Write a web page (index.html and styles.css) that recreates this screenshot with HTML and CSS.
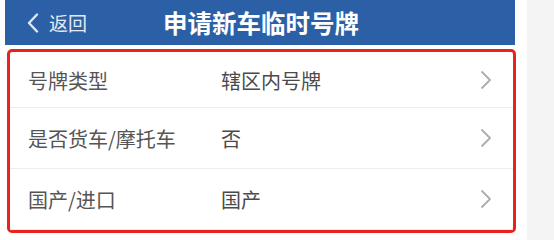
FILE: index.html
```html
<!DOCTYPE html>
<html lang="zh-CN">
<head>
<meta charset="utf-8">
<title>申请新车临时号牌</title>
<link rel="stylesheet" href="styles.css">
</head>
<body>
<div class="page">
  <header class="topbar">
    <div class="back">
      <svg class="back-icon" width="14" height="20" viewBox="0 0 14 20"><polyline points="11,1.5 3,10 11,18.5" fill="none" stroke="#dfe7f3" stroke-width="2.4" stroke-linecap="round" stroke-linejoin="round"/></svg>
      <span class="back-text">返回</span>
    </div>
    <h1 class="title">申请新车临时号牌</h1>
  </header>
  <div class="list">
    <div class="row first">
      <span class="label">号牌类型</span>
      <span class="value">辖区内号牌</span>
      <svg class="arrow" width="12" height="20" viewBox="0 0 12 20"><polyline points="1.5,1.5 10,10 1.5,18.5" fill="none" stroke="#adadad" stroke-width="1.8" stroke-linejoin="round"/></svg>
    </div>
    <div class="row">
      <span class="label">是否货车/摩托车</span>
      <span class="value">否</span>
      <svg class="arrow" width="12" height="20" viewBox="0 0 12 20"><polyline points="1.5,1.5 10,10 1.5,18.5" fill="none" stroke="#adadad" stroke-width="1.8" stroke-linejoin="round"/></svg>
    </div>
    <div class="row">
      <span class="label">国产/进口</span>
      <span class="value">国产</span>
      <svg class="arrow" width="12" height="20" viewBox="0 0 12 20"><polyline points="1.5,1.5 10,10 1.5,18.5" fill="none" stroke="#adadad" stroke-width="1.8" stroke-linejoin="round"/></svg>
    </div>
  </div>
</div>
</body>
</html>
```
FILE: styles.css
```css
html, body {
  margin: 0;
  padding: 0;
  background: #f4f4f4;
  font-family: "Noto Sans CJK SC", "Noto Sans", sans-serif;
}
.page {
  width: 527px;
  min-height: 100vh;
  background: #ffffff;
  padding-bottom: 1px;
}
.topbar {
  margin-left: 5px;
  width: 510px;
  height: 45px;
  background: #2b5fa6;
  display: flex;
  align-items: center;
  position: relative;
}
.back {
  display: flex;
  align-items: center;
  padding-left: 21px;
  gap: 9px;
  color: #e3eaf4;
}
.back-icon {
  display: block;
}
.back-text {
  font-size: 19px;
  line-height: 1;
}
.title {
  position: absolute;
  left: 0;
  right: 0;
  top: 0;
  margin: 0;
  text-align: center;
  line-height: 45px;
  font-size: 24.5px;
  font-weight: 700;
  color: #ffffff;
  pointer-events: none;
  padding-left: 2px;
}
.list {
  margin: 4px 11px 0 7px;
  border: 3px solid #e8231d;
  border-radius: 5px;
  background: #ffffff;
}
.row {
  height: 60px;
  display: flex;
  align-items: center;
  padding: 0 21px 0 18px;
  border-bottom: 1px solid #ededed;
  font-size: 20px;
  color: #555555;
}
.row.first {
  height: 54px;
  padding-top: 1px;
}
.label {
  width: 193px;
  flex: none;
}
.value {
  flex: 1;
  color: #4a4a4a;
}
.arrow {
  display: block;
  flex: none;
}
```
